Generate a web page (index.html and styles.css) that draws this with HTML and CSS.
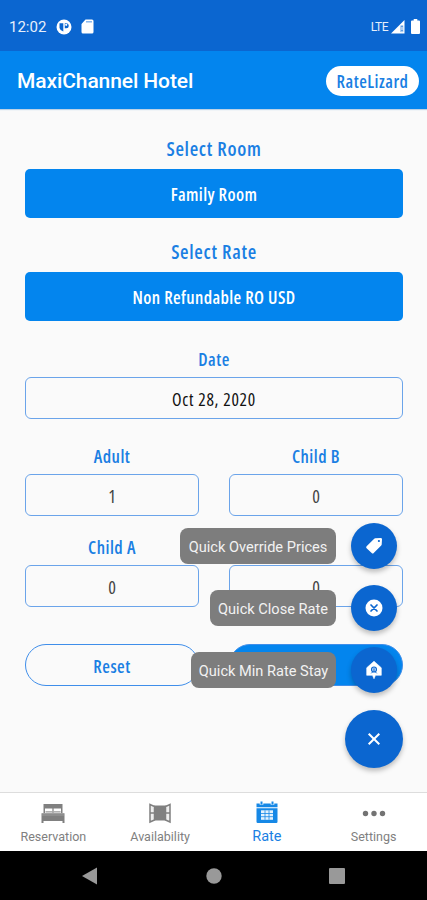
FILE: index.html
```html
<!DOCTYPE html>
<html lang="en">
<head>
    <meta charset="UTF-8">
    <title>MaxiChannel Hotel</title>
    <link rel="stylesheet" href="styles.css">
</head>
<body>
    <!-- status bar -->
    <div class="status">
        <span class="time">12:02</span>
        <svg class="status-app" width="16" height="16" viewBox="0 0 16 16">
            <circle cx="8" cy="8" r="7.5" fill="#fff"/>
            <path d="M3.500 4.200h3.800v8.300A4.800 4.800 0 0 1 3.500 9zM8.800 4.200h1.400a2.500 2.500 0 0 1 0 5H8.800z" fill="#0b66d0"/>
            <circle cx="10.200" cy="5.800" r="1.100" fill="#fff"/>
        </svg>
        <svg class="status-card" width="13" height="15" viewBox="0 0 13 15">
            <path d="M4.5 0.5H11a1.5 1.5 0 0 1 1.5 1.5v11a1.5 1.5 0 0 1-1.5 1.5H2A1.5 1.5 0 0 1 .5 13V5z" fill="#fff"/>
            <path d="M5 2.8h6" stroke="#7fb0ea" stroke-width="1.4"/>
        </svg>
        <span class="lte">LTE</span>
        <svg class="signal" width="14" height="14" viewBox="0 0 14 14">
            <path d="M0 13.5L13.5 0v13.5z" fill="#fff"/>
            <path d="M9.5 5.500h2.700v6.600H9.500z" fill="#5f9ce2"/>
            <path d="M11 7v3M11 11v1" stroke="#fff" stroke-width="1"/>
        </svg>
        <svg class="battery" width="9" height="15" viewBox="0 0 9 15">
            <path d="M2.7 0h3.6v1.6H8a1 1 0 0 1 1 1V14a1 1 0 0 1-1 1H1a1 1 0 0 1-1-1V2.600a1 1 0 0 1 1-1h1.700z" fill="#fff"/>
        </svg>
    </div>

    <div class="header">
        <h1>MaxiChannel Hotel</h1>
        <a class="brand" href="#">RateLizard</a>
    </div>

    <!-- rate form -->
    <div class="content">
        <div class="label big">Select Room</div>
        <div class="select">Family Room</div>
        <div class="label big">Select Rate</div>
        <div class="select">Non Refundable RO USD</div>
        <div class="label date">Date</div>
        <div class="field dark">Oct 28, 2020</div>
        <div class="grid">
            <div>
                <div class="label">Adult</div>
                <div class="field">1</div>
            </div>
            <div>
                <div class="label">Child B</div>
                <div class="field">0</div>
            </div>
            <div>
                <div class="label">Child A</div>
                <div class="field">0</div>
            </div>
            <div>
                <div class="label">&nbsp;</div>
                <div class="field">0</div>
            </div>
        </div>
        <div class="buttons">
            <div class="btn">Reset</div>
            <div class="btn primary"></div>
        </div>

        <!-- floating menu -->
        <div class="fab-menu">
            <div class="fab-row">
                <span class="tip tip-prices">Quick Override Prices</span>
                <div class="fab">
                    <svg width="18" height="18" viewBox="0 0 18 18">
                        <path d="M10.200 1.300L15.800 1a1.200 1.200 0 0 1 1.200 1.200l-.3 5.300a1.500 1.500 0 0 1-.5 1L8.700 16a1.400 1.400 0 0 1-2 0L1.600 11.300a1.400 1.400 0 0 1 0-2l7.600-7.500a1.500 1.500 0 0 1 1-.5z" fill="#fff"/>
                        <circle cx="13.900" cy="4" r="1.100" fill="#0b66d0"/>
                    </svg>
                </div>
            </div>
            <div class="fab-row">
                <span class="tip tip-close">Quick Close Rate</span>
                <div class="fab">
                    <svg width="18" height="18" viewBox="0 0 18 18">
                        <circle cx="9" cy="9" r="8.500" fill="#fff"/>
                        <path d="M6 6l6 6M12 6l-6 6" stroke="#0b66d0" stroke-width="1.700" stroke-linecap="round"/>
                    </svg>
                </div>
            </div>
            <div class="fab-row">
                <span class="tip tip-stay">Quick Min Rate Stay</span>
                <div class="fab">
                    <svg width="18" height="18" viewBox="0 0 18 18">
                        <path d="M9 .2l7.300 6.600v7.500h-5.800L9 17.800 7.500 14.300H1.700V6.800z" fill="#fff" stroke="#fff" stroke-width=".6" stroke-linejoin="round"/>
                        <circle cx="9" cy="8.500" r="2.500" fill="#b9d4f4" stroke="#0b66d0" stroke-width="1.100"/>
                        <path d="M9 7.300v4M6.300 12.300l1.300-1.300M11.700 12.300l-1.300-1.300" stroke="#0b66d0" stroke-width="1"/>
                    </svg>
                </div>
            </div>
            <div class="fab main">
                <svg width="14" height="14" viewBox="0 0 14 14">
                    <path d="M1.700 1.700l10.600 10.600M12.300 1.700L1.700 12.300" stroke="#fff" stroke-width="2"/>
                </svg>
            </div>
        </div>
    </div>

    <!-- tabs -->
    <div class="tabs">
        <div class="tab">
            <svg width="24" height="24" viewBox="0 0 24 24" fill="#808080">
                <path d="M2.500 3h19v4.500h-19zM2.500 7h1.500v5H2.500zM20 7h1.500v5H20z"/>
                <path d="M4.500 10.800h6.800M12.800 10.800h6.800" stroke="#999" stroke-width="1.200"/>
                <path d="M12 7v5" stroke="#808080" stroke-width="1.200"/>
                <path d="M.5 12.300h23V22h-2v-2h-19v2h-2z"/>
                <path d="M1 14h22" stroke="#aaa" stroke-width=".7"/>
            </svg>
            <span>Reservation</span>
        </div>
        <div class="tab">
            <svg width="24" height="24" viewBox="0 0 24 24" fill="#808080">
                <path d="M5.500 4.500h13v15h-13z"/>
                <path d="M2 3.500l4.500 2v13.500L2 21zM22 3.500l-4.500 2v13.500l4.500 2z" fill="#eee" stroke="#808080" stroke-width="1.500"/>
                <path d="M2 12h4.500M17.500 12H22" stroke="#808080" stroke-width="1.400"/>
            </svg>
            <span>Availability</span>
        </div>
        <div class="tab active">
            <svg width="24" height="24" viewBox="0 0 24 24">
                <path d="M1.500 2.500h21v3.800h-21zM1.500 7.300h21v13.500a1.200 1.200 0 0 1-1.200 1.200H2.700a1.200 1.200 0 0 1-1.200-1.200z" fill="#1688e6"/>
                <path d="M6.500 .5v3.300M17.500 .5v3.300" stroke="#fff" stroke-width="3.600"/>
                <path d="M6.500 .5v3M17.500 .5v3" stroke="#1688e6" stroke-width="2"/>
                <path d="M6 9.300h12v9.500H6z" fill="#e4f2fd"/>
                <path d="M6 12.500h12M6 15.700h12M10 9.300v9.500M14 9.300v9.500" stroke="#1688e6" stroke-width=".8"/>
            </svg>
            <span>Rate</span>
        </div>
        <div class="tab">
            <svg width="24" height="24" viewBox="0 0 24 24" fill="#737373">
                <circle cx="3.500" cy="12.500" r="2.700"/>
                <circle cx="12" cy="12.500" r="2.700"/>
                <circle cx="20.500" cy="12.500" r="2.700"/>
            </svg>
            <span>Settings</span>
        </div>
    </div>

    <!-- android navigation -->
    <div class="navbar">
        <svg width="18" height="18" viewBox="0 0 18 18"><path d="M1 9L16 .5v17z" fill="#999"/></svg>
        <svg width="18" height="18" viewBox="0 0 18 18"><circle cx="9" cy="9" r="7.700" fill="#999"/></svg>
        <svg width="18" height="18" viewBox="0 0 18 18"><rect x="1" y="1" width="16" height="16" rx="1" fill="#999"/></svg>
    </div>
</body>
</html>
```
FILE: styles.css
```css
*{
    margin: 0;
    padding: 0;
    box-sizing: border-box;
}
body{
    width: 427px;
    height: 900px;
    display: flex;
    flex-direction: column;
    overflow: hidden;
    background-color: #fafafa;
    font-family: Roboto, "Liberation Sans", sans-serif;
}
svg{
    display: block;
    flex: none;
}

/* status bar */
.status{
    height: 51px;
    padding: 2px 7px 0 9px;
    display: flex;
    align-items: center;
    background-color: #0b66d0;
    color: #e6effb;
}
.time{
    width: 47px;
    font-size: 15px;
}
.status-card{
    margin-left: 9px;
}
.lte{
    margin-left: auto;
    font-size: 12px;
    letter-spacing: -.5px;
}
.signal{
    margin-left: 3px;
}
.battery{
    margin-left: 6px;
}

/* header */
.header{
    height: 58px;
    padding: 2px 8px 0 17px;
    display: flex;
    align-items: center;
    justify-content: space-between;
    background-color: #0385ee;
    box-shadow: 0 1px 1px #bcd2e6;
}
.header h1{
    color: #fff;
    font-size: 21px;
    font-weight: 500;
    letter-spacing: -.1px;
}
.brand{
    width: 93px;
    height: 30px;
    border-radius: 15px;
    background-color: #fff;
    color: #1a7fe3;
    font: 600 17.500px/30px "Open Sans", sans-serif;
    font-stretch: 75%;
    letter-spacing: .5px;
    text-align: center;
    text-decoration: none;
}

/* form */
.content{
    position: relative;
    height: 683px;
    padding: 26px 24px 0 25px;
    font-family: "Open Sans", sans-serif;
    font-stretch: 75%;
    text-align: center;
}
.label{
    height: 30px;
    color: #1a7fe3;
    font-size: 17.500px;
    font-weight: 600;
    line-height: 24px;
    letter-spacing: .5px;
}
.label.big{
    height: 34px;
    font-size: 19.500px;
    line-height: 27px;
    letter-spacing: .7px;
}
.label.date{
    margin-top: 26px;
}
.select{
    height: 49px;
    margin-bottom: 20px;
    border-radius: 5px;
    background-color: #0385ee;
    color: #fff;
    font-size: 17.500px;
    font-weight: 600;
    line-height: 51px;
    letter-spacing: .4px;
}
.field{
    height: 42px;
    border: 1px solid #6ba4ea;
    border-radius: 6px;
    color: #444;
    font-size: 18px;
    line-height: 42px;
}
.field.dark{
    color: #111;
    font-size: 17.500px;
    letter-spacing: .75px;
}
.grid{
    margin-top: 25px;
    display: grid;
    grid-template-columns: 1fr 1fr;
    gap: 19px 30px;
}
.buttons{
    margin-top: 37px;
    display: flex;
    gap: 30px;
}
.btn{
    flex: 1;
    height: 42px;
    border: 1px solid #3f8eea;
    border-radius: 21px;
    color: #1a7fe3;
    font-size: 17.500px;
    font-weight: 600;
    line-height: 42px;
    letter-spacing: .5px;
}
.btn.primary{
    background-color: #0385ee;
}

/* floating menu lies over the form */
.fab-menu{
    position: absolute;
    top: 414px;
    right: 24px;
    display: flex;
    flex-direction: column;
    align-items: flex-end;
    gap: 16px;
    font-family: Roboto, sans-serif;
    font-stretch: normal;
}
.fab-row{
    height: 46px;
    padding-right: 6px;
    display: flex;
    align-items: center;
    gap: 15px;
}
.tip{
    height: 36px;
    border-radius: 8px;
    background-color: #7d7d7d;
    color: #f2f2f2;
    font-size: 14.600px;
    line-height: 38px;
}
.tip-prices{
    width: 156px;
}
.tip-close{
    width: 126px;
}
.tip-stay{
    width: 145px;
}
.fab{
    width: 46px;
    height: 46px;
    display: flex;
    align-items: center;
    justify-content: center;
    border-radius: 50%;
    background-color: #0b66d0;
    box-shadow: 0 3px 5px rgba(0, 0, 0, .25);
}
.fab.main{
    width: 58px;
    height: 58px;
    margin-top: 1px;
}

/* tabs */
.tabs{
    height: 59px;
    display: flex;
    border-top: 1px solid #ddd;
    background-color: #fff;
}
.tab{
    flex: 1;
    padding-top: 8px;
    display: flex;
    flex-direction: column;
    align-items: center;
    gap: 3px;
    color: #808080;
    font-size: 12.500px;
    line-height: 17px;
}
.tab.active{
    color: #1a7fe3;
    font-size: 14.500px;
}

/* android navigation */
.navbar{
    height: 49px;
    padding: 0 81px;
    display: flex;
    align-items: center;
    justify-content: space-between;
    background-color: #000;
}
```
